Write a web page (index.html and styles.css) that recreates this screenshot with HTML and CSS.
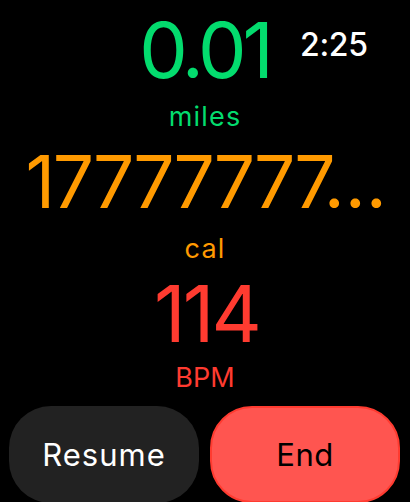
FILE: index.html
```html
<!DOCTYPE html>
<html lang="en">
<head>
<meta charset="utf-8">
<title>Workout</title>
<link rel="stylesheet" href="styles.css">
</head>
<body>
<div class="screen">
  <div class="clock">2:25</div>
  <div class="metric distance">0.01</div>
  <div class="unit distance-unit">miles</div>
  <div class="metric calories">17777777…</div>
  <div class="unit calories-unit">cal</div>
  <div class="metric heart">114</div>
  <div class="unit heart-unit">BPM</div>
  <div class="actions">
    <button class="btn btn-resume">Resume</button>
    <button class="btn btn-end">End</button>
  </div>
</div>
</body>
</html>
```
FILE: styles.css
```css
html, body {
  margin: 0;
  padding: 0;
  background: #000;
}
body {
  width: 410px;
  height: 502px;
  overflow: hidden;
  font-family: Inter, "Noto Sans", sans-serif;
}
.screen {
  position: relative;
  display: flex;
  flex-direction: column;
  align-items: stretch;
  text-align: center;
}
.clock {
  position: absolute;
  top: 0;
  left: 300px;
  font-size: 32px;
  line-height: 90px;
  color: #fff;
  font-weight: 500;
  letter-spacing: -0.3px;
}
.metric {
  font-weight: 400;
  white-space: nowrap;
}
.unit {
  letter-spacing: 1.2px;
}
.distance {
  font-size: 77px;
  line-height: 100px;
  color: #03DC6E;
  letter-spacing: -4px;
  padding-right: 1px;
}
.distance-unit {
  font-size: 27px;
  line-height: 33px;
  color: #03DC6E;
}
.calories {
  font-size: 73px;
  line-height: 97px;
  color: #FF9A00;
  letter-spacing: -2.5px;
}
.calories-unit {
  font-size: 27px;
  line-height: 37px;
  color: #FF9A00;
}
.heart {
  font-size: 78px;
  line-height: 93px;
  color: #FF3B30;
  letter-spacing: -3px;
  padding-left: 3px;
}
.heart-unit {
  font-size: 27px;
  line-height: 36px;
  color: #FF3B30;
  letter-spacing: 0;
}
.actions {
  display: flex;
  gap: 11px;
  margin: 10px 0 0 9px;
}
.btn {
  flex: 0 0 190px;
  box-sizing: border-box;
  height: 97px;
  border-radius: 42px;
  font-family: Inter, "Noto Sans", sans-serif;
  font-size: 31px;
  font-weight: 400;
  border: none;
  padding: 0;
  letter-spacing: 1px;
}
.btn-resume {
  background: #222222;
  color: #fff;
}
.btn-end {
  background: #FF5550;
  color: #000;
  border: 2px solid #FF3B30;
  letter-spacing: 0.5px;
}
```
